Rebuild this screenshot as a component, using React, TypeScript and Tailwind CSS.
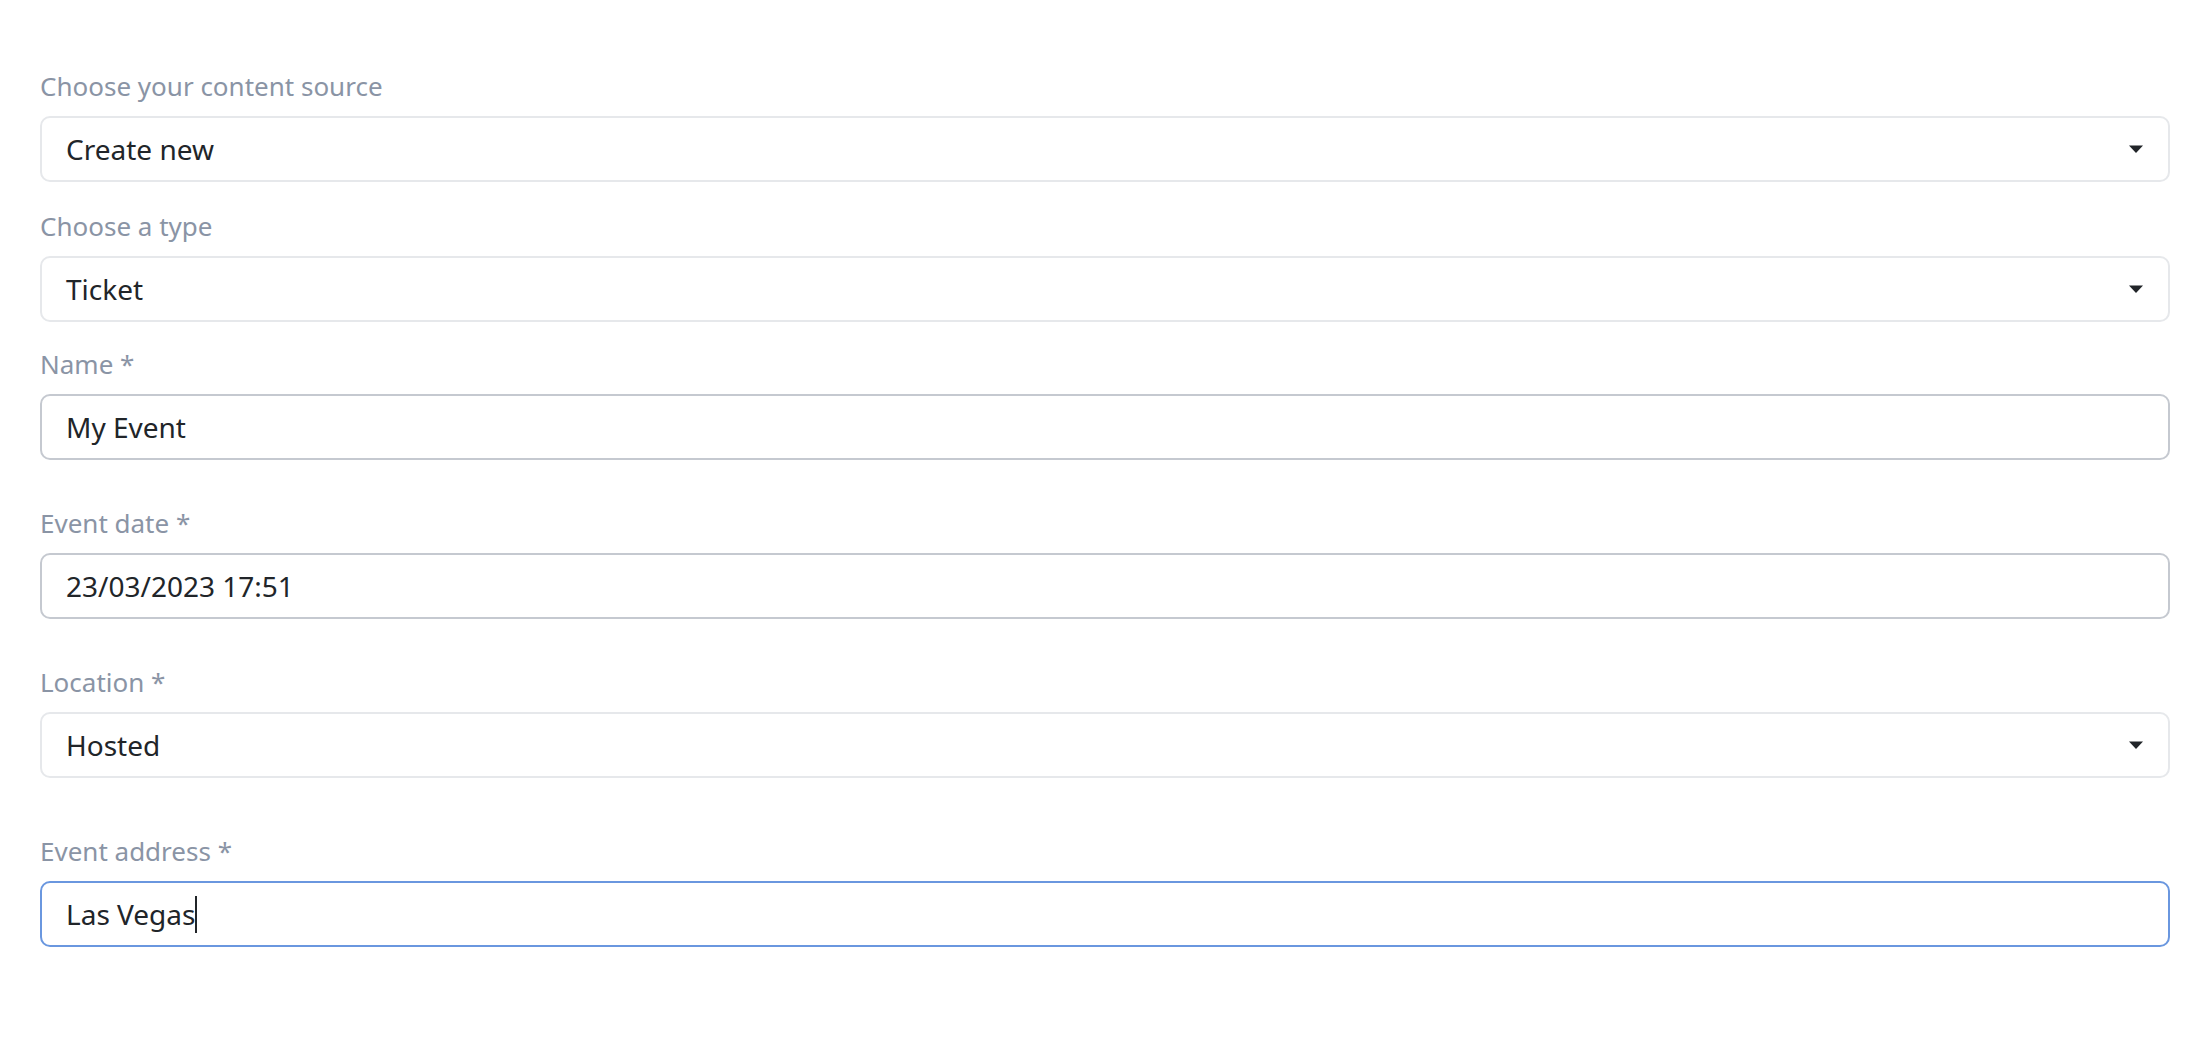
const fieldText = "text-[28px] text-[#212529]";

function Caret() {
  return <svg width="14" height="8" viewBox="0 0 14 8" className="shrink-0"><path d="M0 0.5h14L7 8z" fill="#212529" /></svg>;
}

type FieldProps = {
  label: string;
  value: string;
  kind: "select" | "input" | "focused";
  className?: string;
};

function Field({ label, value, kind, className = "" }: FieldProps) {
  // border colour depends on the control type / focus state
  const border =
    kind === "select"
      ? "border-[#e6e8eb]"
      : kind === "input"
      ? "border-[#c5c9d0]"
      : "border-[#6a97df]";

  return (
    <div className={className}>
      <div className="text-[26px] leading-[39px] text-[#8a94a5] mb-[10px]">{label}</div>
      <div className={`h-[66px] rounded-[10px] border-2 ${border} bg-white pl-[24px] pr-[25px] flex items-center justify-between`}>
        <div className={`${fieldText} flex items-center`}>
          <span>{value}</span>
          {kind === "focused" && <span className="inline-block w-[2px] h-[37px] bg-[#212529]" />}
        </div>
        {kind === "select" && <Caret />}
      </div>
    </div>
  );
}

export default function App() {
  return (
    <div className="min-h-screen w-full bg-white px-[40px] pt-[67px]" style={{ fontFamily: '"Noto Sans", "Open Sans", sans-serif' }}>
      <Field label="Choose your content source" value="Create new" kind="select" />
      <Field label="Choose a type" value="Ticket" kind="select" className="mt-[25px]" />
      <Field label="Name *" value="My Event" kind="input" className="mt-[23px]" />
      <Field label="Event date *" value="23/03/2023 17:51" kind="input" className="mt-[44px]" />
      <Field label="Location *" value="Hosted" kind="select" className="mt-[44px]" />
      <Field label="Event address *" value="Las Vegas" kind="focused" className="mt-[54px]" />
    </div>
  );
}
